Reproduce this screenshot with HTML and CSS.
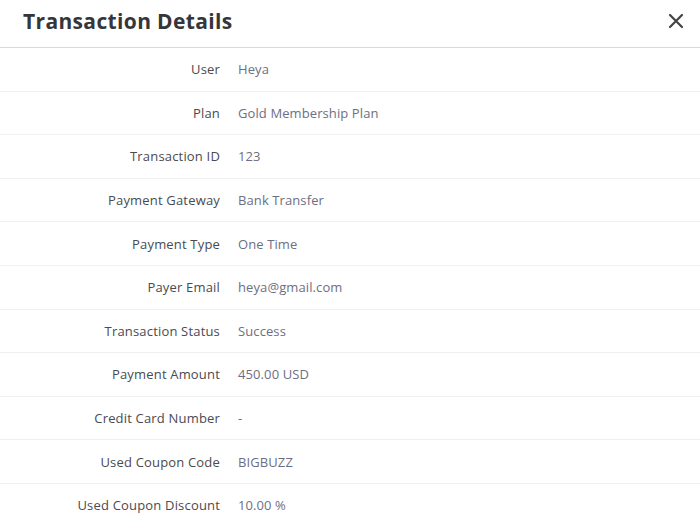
FILE: index.html
```html
<!DOCTYPE html>
<html>
<head>
<meta charset="utf-8">
<link rel="stylesheet" href="styles.css">
</head>
<body>
<div class="modal">
  <div class="header">
    <h1 class="title">Transaction Details</h1>
    <button class="close" aria-label="Close">
      <svg width="16" height="16" viewBox="0 0 16 16"><path d="M2 2L14 14M14 2L2 14" stroke="#444" stroke-width="2.2" stroke-linecap="round"/></svg>
    </button>
  </div>
  <div class="rows">
    <div class="row"><div class="label">User</div><div class="value">Heya</div></div>
    <div class="row"><div class="label">Plan</div><div class="value">Gold Membership Plan</div></div>
    <div class="row"><div class="label">Transaction ID</div><div class="value">123</div></div>
    <div class="row"><div class="label">Payment Gateway</div><div class="value">Bank Transfer</div></div>
    <div class="row"><div class="label">Payment Type</div><div class="value">One Time</div></div>
    <div class="row"><div class="label">Payer Email</div><div class="value">heya@gmail.com</div></div>
    <div class="row"><div class="label">Transaction Status</div><div class="value">Success</div></div>
    <div class="row"><div class="label">Payment Amount</div><div class="value">450.00 USD</div></div>
    <div class="row"><div class="label">Credit Card Number</div><div class="value">-</div></div>
    <div class="row"><div class="label">Used Coupon Code</div><div class="value">BIGBUZZ</div></div>
    <div class="row"><div class="label">Used Coupon Discount</div><div class="value">10.00 %</div></div>
  </div>
</div>
</body>
</html>
```
FILE: styles.css
```css
html, body {
  margin: 0;
  padding: 0;
  background: #fff;
  overflow: hidden;
}
body {
  font-family: "Open Sans", "Liberation Sans", sans-serif;
}
.modal {
  width: 700px;
}
.header {
  height: 47px;
  display: flex;
  align-items: center;
  justify-content: space-between;
  padding: 0 16px 0 23px;
  border-bottom: 1.5px solid #d9d9dc;
}
.title {
  margin: 0;
  font-size: 21px;
  font-weight: 700;
  color: #35363b;
  letter-spacing: 0.35px;
  position: relative;
  top: -3px;
}
.close {
  border: none;
  background: none;
  padding: 0;
  width: 16px;
  height: 16px;
  display: flex;
  position: relative;
  top: -3px;
}
.row {
  display: flex;
  align-items: center;
  height: 42.6px;
  border-bottom: 1px solid #f0f0f2;
  font-size: 13px;
}
.label {
  width: 220px;
  text-align: right;
  color: #4a4a50;
  letter-spacing: 0.18px;
  flex: none;
}
.value {
  margin-left: 18px;
  color: #6e6e82;
  letter-spacing: 0.1px;
}
```
